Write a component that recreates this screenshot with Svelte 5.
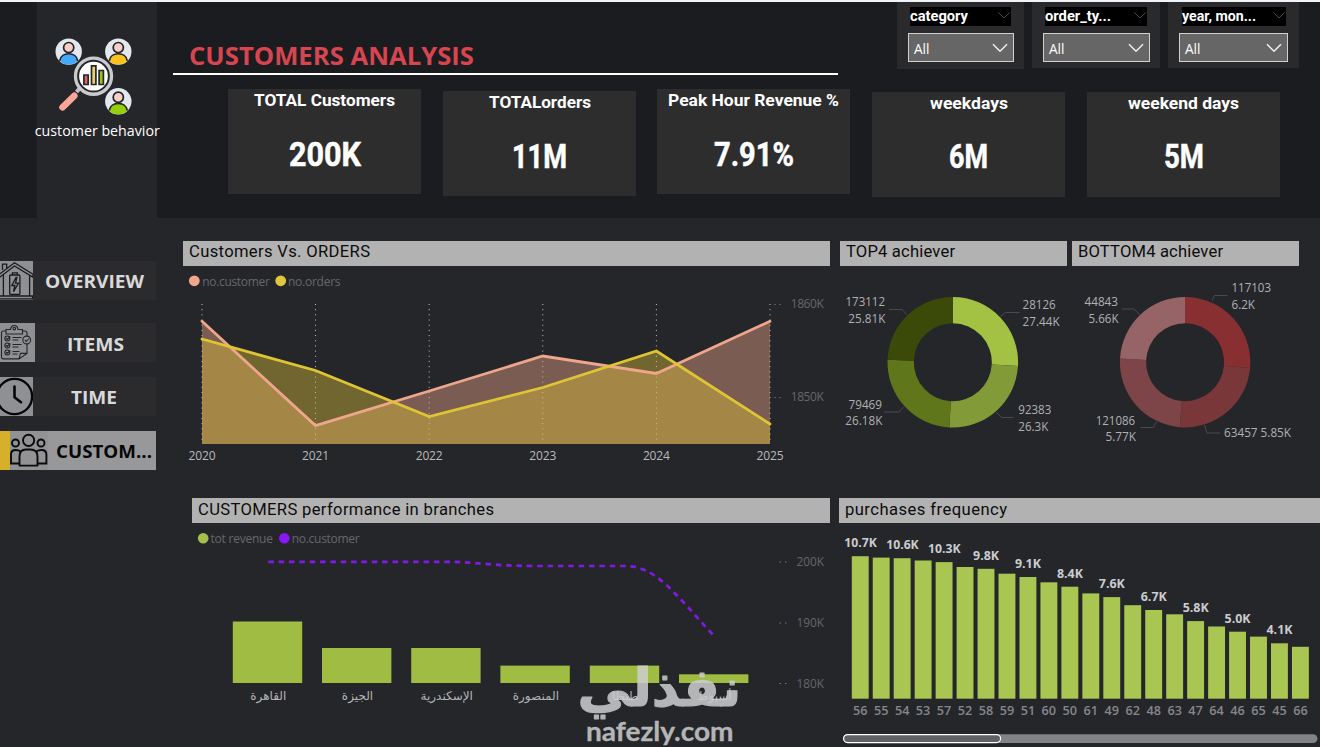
<script>
  const din = 'Roboto, sans-serif';
  const segoe = '"Open Sans", "Noto Sans", sans-serif';

  const slicers = [
    { name: 'category', w: 127, h: 67, tw: 58, box: 106, cap: 101, left: 11, ml: 2 },
    { name: 'order_ty...', w: 128, h: 66, tw: 66, box: 107, cap: 102, left: 11, ml: 2 },
    { name: 'year, mon...', w: 131, h: 66, tw: 74, box: 109, cap: 104, left: 11, ml: 3 }
  ];

  const cards = [
    { label: 'TOTAL Customers', lw: 141, value: '200K', vw: 72, top: 0, ml: 0, b: 17.3, vb: 37.4 },
    { label: 'TOTALorders', lw: 102, value: '11M', vw: 55, top: 1.5, ml: 22, b: 16.5, vb: 36.6 },
    { label: 'Peak Hour Revenue %', lw: 171, value: '7.91%', vw: 80, top: 0, ml: 21, b: 17.3, vb: 37.4 },
    { label: 'weekdays', lw: 78, value: '6M', vw: 39, top: 3, ml: 22, b: 17.3, vb: 36.4 },
    { label: 'weekend days', lw: 111, value: '5M', vw: 40, top: 3, ml: 22, b: 17.3, vb: 36.4 }
  ];

  const years = [2020, 2021, 2022, 2023, 2024, 2025];
  const xs = [202, 315.5, 429.2, 542.8, 656.4, 770];
  const customers = [321.3, 425.6, 391, 356, 373.5, 321.3];
  const orders = [339, 370.5, 416.5, 387.5, 351, 424];
  const line = (ys) => ys.map((y, i) => `${xs[i]},${y}`).join(' ');
  const area = (ys) => `${line(ys)} 770,444 202,444`;

  function ring(cx, cy, R, r, values, colors) {
    const total = values.reduce((a, b) => a + b, 0);
    let a = -Math.PI / 2;
    return values.map((v, i) => {
      const e = a + (v / total) * Math.PI * 2;
      const p = (rad, t) => `${(cx + rad * Math.cos(t)).toFixed(2)} ${(cy + rad * Math.sin(t)).toFixed(2)}`;
      const d = `M${p(R, a)}A${R} ${R} 0 0 1 ${p(R, e)}L${p(r, e)}A${r} ${r} 0 0 0 ${p(r, a)}Z`;
      a = e;
      return { d, fill: colors[i] };
    });
  }
  const topRing = ring(952.8, 362.2, 65.3, 39, [27.44, 26.3, 26.18, 25.81], ['#a3c142', '#839a39', '#5f771a', '#3b4a09']);
  const bottomRing = ring(1185.1, 362.2, 65.2, 39, [6.2, 5.85, 5.77, 5.66], ['#882f31', '#79373a', '#7d4548', '#966366']);

  const topLabels = [
    { t: '173112', x: 845.5, y: 306, w: 39.5 }, { t: '25.81K', x: 848.3, y: 323, w: 37 },
    { t: '28126', x: 1022.6, y: 309, w: 33 }, { t: '27.44K', x: 1022.6, y: 326, w: 37 },
    { t: '79469', x: 848.5, y: 409, w: 33.5 }, { t: '26.18K', x: 845.3, y: 425, w: 37 },
    { t: '92383', x: 1018.3, y: 414, w: 33 }, { t: '26.3K', x: 1018.3, y: 431, w: 30 }
  ];
  const bottomLabels = [
    { t: '44843', x: 1084.5, y: 306, w: 33.5 }, { t: '5.66K', x: 1088.5, y: 323, w: 30 },
    { t: '117103', x: 1231.5, y: 292, w: 39.5 }, { t: '6.2K', x: 1231.5, y: 309, w: 23.5 },
    { t: '121086', x: 1095.7, y: 425, w: 39.5 }, { t: '5.77K', x: 1105.5, y: 441, w: 30.5 },
    { t: '63457 5.85K', x: 1224, y: 437.3, w: 67 }
  ];

  const branches = [
    { n: 'القاهرة', x: 232.8, top: 621.5 }, { n: 'الجيزة', x: 322, top: 648 },
    { n: 'الإسكندرية', x: 411.2, top: 648 }, { n: 'المنصورة', x: 500.4, top: 665.6 },
    { n: 'طنطا', x: 589.8, top: 665.6 }, { n: 'أسيوط', x: 679, top: 674.3 }
  ];

  const ids = [56, 55, 54, 53, 57, 52, 58, 59, 51, 60, 50, 61, 49, 62, 48, 63, 47, 64, 46, 65, 45, 66];
  const tops = [556.2, 557.6, 558.2, 560.5, 562.1, 567, 568.8, 573.7, 577, 582.3, 586.7, 593.4, 597.1, 605.2, 610, 614.3, 621.1, 626.5, 631.7, 636.6, 643.3, 646.8];
  const freq = ['10.7K', '10.6K', '10.3K', '9.8K', '9.1K', '8.4K', '7.6K', '6.7K', '5.8K', '5.0K', '4.1K'];
  const barX = (i) => 851.8 + i * 20.96;
</script>

{#snippet fit(text, w, size, h, base, weight, family, adjust)}
  <svg class="fit" width={w} height={h}>
    <text y={base} font-size={size} font-weight={weight} font-family={family} textLength={w} lengthAdjust={adjust ?? 'spacingAndGlyphs'}>{text}</text>
  </svg>
{/snippet}

{#snippet person(x, y, color)}
  <g transform="translate({x} {y})">
    <circle r="13.2" fill="#e3e8ef" />
    <path d="M-9 9.4C-8-.2 8-.2 9 9.4A13.2 13.2 0 0 1-9 9.4Z" fill={color} />
    <path d="M-9 9.2C-7.5-.2 7.5-.2 9 9.2" fill="none" stroke="#222326" stroke-width="1.7" />
    <circle cy="-4" r="5.1" fill="#f9cfc5" stroke="#222326" stroke-width="1.7" />
  </g>
{/snippet}

<div class="page">
  <div class="strip"></div>
  <header>
    <div class="brand">
      <svg width="120" height="216" viewBox="37 2 120 216">
        {@render person(68.7, 51.6, '#45a9fb')}
        {@render person(118.3, 51.6, '#fbc21e')}
        {@render person(118.3, 101.3, '#95cf0b')}
        <path d="M80 88l-3.5 4" stroke="#bfc0c4" stroke-width="4" />
        <path d="M74.3 95.8L62.5 107.3" stroke="#f7a699" stroke-width="6.6" stroke-linecap="round" />
        <circle cx="93.5" cy="76.2" r="18" fill="#fff" stroke="#c9cacd" stroke-width="3.4" />
        <circle cx="93.5" cy="76.2" r="15.4" fill="#fff" stroke="#252629" stroke-width="2" />
        <g stroke="#252629" stroke-width="1.7">
          <path d="M83.9 75h4.3v9.5h-4.3z" fill="#dc6064" />
          <path d="M91.5 65.9h4.4v18.6h-4.4z" fill="#ead06a" />
          <path d="M99.1 70.5h4.3v14h-4.3z" fill="#98c514" />
        </g>
        <text x="34.8" y="136" font-size="14.6" font-family={segoe} fill="#fff" textLength="125" lengthAdjust="spacingAndGlyphs">customer behavior</text>
      </svg>
    </div>
    <div class="head">
      <div class="toprow">
        <h1>{@render fit('CUSTOMERS ANALYSIS', 285, 25.2, 36, 28, 700, segoe)}</h1>
        <div class="slicers">
          {#each slicers as s}
            <div class="slicer" style="width:{s.w}px;height:{s.h}px">
              <div class="cap" style="width:{s.cap}px;margin-left:{s.left + s.ml}px">
                {@render fit(s.name, s.tw, 15.4, 19, 14, 700, din)}
                <svg width="14" height="9" viewBox="0 0 14 9"><path d="M1.5 1.5L7 7l5.5-5.5" fill="none" stroke="#4a4a4c" stroke-width="1" /></svg>
              </div>
              <div class="select" style="width:{s.box}px;margin-left:{s.left}px">
                {@render fit('All', 15.5, 14, 20, 15.5, 400, segoe)}
                <svg width="16" height="10" viewBox="0 0 16 10"><path d="M1 1.3L8 8.3l7-7" fill="none" stroke="#f1f1f1" stroke-width="1.5" /></svg>
              </div>
            </div>
          {/each}
        </div>
      </div>
      <div class="cards">
        {#each cards as c}
          <div class="card" style="margin-top:{c.top}px;margin-left:{c.ml}px">
            {@render fit(c.label, c.lw, 17.4, 40, c.b, 700, din)}
            <div class="value">{@render fit(c.value, c.vw, 32.6, 50, c.vb, 700, din)}</div>
          </div>
        {/each}
      </div>
    </div>
  </header>

  <div class="body">
    <nav>
      <div class="item" style="margin-top:43px">
        <svg class="ico" width="33" height="39" viewBox="0 0 33 39" fill="none" stroke="#1a1a1c" stroke-width="1.3">
          <path d="M-1 13.5L14.5 1.8 33 13.2v3L14.5 5-1 16.800M2.500 9V3.200h4.200V7M3.400 14v20.600M29.600 14.500v20.100M-1 35h33.500v2.800H-1" />
          <rect x="9.700" y="14" width="10.200" height="19.500" rx="1" /><path d="M12.400 14v-2.200h5V14M16 16.500l-4.200 8h3l-1.300 6.200 5-8.600h-3l1.400-5.600z" />
        </svg>
        <div class="name">{@render fit('OVERVIEW', 99, 18, 39, 27, 700, segoe)}</div>
      </div>
      <div class="item" style="margin-top:23px">
        <svg class="ico" width="35" height="39" viewBox="0 0 35 39" fill="none" stroke="#242426" stroke-width="1.1">
          <path d="M6 8H3.200Q1.500 8 1.500 9.800V34q0 1.900 2 1.900H19l8-5.500V21M22.500 8h2.500q2 0 2 2v3M19 35.900l1.500-5.500H27M6 11V6.500h4.500Q11 2.500 14.300 2.500T18 6.500h4.500V11z" />
          <circle cx="14.300" cy="5.600" r="1.300" /><circle cx="26.700" cy="17" r="3.900" /><path d="M24.800 17l1.500 1.500 2.700-3" />
          <circle cx="7.300" cy="15.500" r="2.500" /><circle cx="7.300" cy="22.500" r="2.500" /><circle cx="7.300" cy="29.500" r="2.500" />
          <path d="M6 15.200l1.200 1.200 3-3M6 22.200l1.200 1.200 3-3M6 29.200l1.200 1.200 3-3M12.500 14.500h9M12.500 17h6M12.500 21.500h9M12.500 24h6M12.500 28.500h7M12.500 31h5" />
        </svg>
        <div class="name">{@render fit('ITEMS', 57, 18, 39, 28, 700, segoe)}</div>
      </div>
      <div class="item" style="margin-top:15px">
        <svg class="ico" width="33" height="39" viewBox="0 0 33 39" fill="none" stroke="#050505" stroke-width="2.300">
          <circle cx="14.500" cy="19.500" r="17.600" /><path d="M14.500 9.500v10.700l6.500 5" stroke-linecap="round" stroke-linejoin="round" stroke-width="2.600" />
        </svg>
        <div class="name">{@render fit('TIME', 46, 18, 39, 27, 700, segoe)}</div>
      </div>
      <div class="item active" style="margin-top:15px">
        <svg class="ico" width="38" height="39" viewBox="10 0 38 39" fill="none" stroke="#0a0a0a" stroke-width="1.900">
          <circle cx="28.600" cy="9.400" r="5.600" /><circle cx="15.500" cy="12" r="3.500" /><circle cx="41" cy="12" r="3.500" />
          <path d="M19.500 34.600v-9Q19.500 18.500 26 18.500h4.500q7 0 7 7v9z" stroke-linejoin="round" />
          <path d="M19.500 32.500H11v-9q0-4.500 4.500-4.500 3.500 0 5 1.500M37.500 32.500H46.400v-9q0-4.500-5-4.500-3 0-5 1.500" />
        </svg>
        <div class="name">{@render fit('CUSTOM...', 96, 18, 39, 27, 700, segoe)}</div>
      </div>
    </nav>

    <main>
      <div class="row first">
        <section style="width:647px">
          <h2>{@render fit('Customers Vs. ORDERS', 181, 16.6, 25, 16, 400, din, 'spacing')}</h2>
          <svg width="647" height="214" viewBox="183 266 647 214" font-family={segoe} font-size="12">
            <circle cx="194.300" cy="280.800" r="5.400" fill="#f0a78c" /><circle cx="280.700" cy="280.800" r="5.400" fill="#dfc63c" />
            <g fill="#66676a"><text x="202.300" y="286" textLength="67.500">no.customer</text><text x="288" y="286" textLength="52.500">no.orders</text></g>
            {#each xs as x}<path d="M{x} 304V444" stroke="#c4c4c4" stroke-width="1" stroke-dasharray="1 4.180" />{/each}
            <path d="M774.500 304.500h1m4 0h1M774.500 397.500h1m4 0h1" stroke="#8a8b8d" />
            <polygon points={area(customers)} fill="#f0a78c" fill-opacity=".42" />
            <polygon points={area(orders)} fill="#e3c838" fill-opacity=".4" />
            <polyline points={line(customers)} fill="none" stroke="#eea68c" stroke-width="2.800" stroke-linecap="round" />
            <polyline points={line(orders)} fill="none" stroke="#dfc534" stroke-width="2.800" stroke-linecap="round" />
            <g fill="#b9babb">{#each years as y, i}<text x={xs[i] - 13.500} y="460" textLength="27">{y}</text>{/each}</g>
            <g fill="#66676a"><text x="790.800" y="308" textLength="33">1860K</text><text x="790.800" y="401" textLength="33">1850K</text></g>
          </svg>
        </section>
        <section style="width:227px;margin-left:10px">
          <h2>{@render fit('TOP4 achiever', 109, 16.600, 25, 16, 400, din, 'spacing')}</h2>
          <svg width="227" height="214" viewBox="840 266 227 214" font-family={segoe} font-size="12.200">
            {#each topRing as s}<path d={s.d} fill={s.fill} />{/each}
            <path d="M889 309.500h13l5 5M1019.500 312.500h-14l-5 4M884 412h15l4.500-5M1013.500 417.500h-12l-5-5" fill="none" stroke="#494a4d" />
            <g fill="#b0b1b3">{#each topLabels as l}<text x={l.x} y={l.y} textLength={l.w} lengthAdjust="spacingAndGlyphs">{l.t}</text>{/each}</g>
          </svg>
        </section>
        <section style="width:227px;margin-left:5px">
          <h2>{@render fit('BOTTOM4 achiever', 145, 16.600, 25, 16, 400, din, 'spacing')}</h2>
          <svg width="227" height="214" viewBox="1072 266 227 214" font-family={segoe} font-size="12.200">
            {#each bottomRing as s}<path d={s.d} fill={s.fill} />{/each}
            <path d="M1122 309h12l5.500 5.500M1227.500 295.500h-13l-2.500 5M1140.500 427.500h13l3-6M1220 433h-13l-2.500-8" fill="none" stroke="#494a4d" />
            <g fill="#b0b1b3">{#each bottomLabels as l}<text x={l.x} y={l.y} textLength={l.w} lengthAdjust="spacingAndGlyphs">{l.t}</text>{/each}</g>
          </svg>
        </section>
      </div>
      <div class="row second">
        <section style="width:638px">
          <h2>{@render fit('CUSTOMERS performance in branches', 296, 16.600, 25, 16.800, 400, din, 'spacing')}</h2>
          <svg width="638" height="224" viewBox="192 523 638 224" font-family={segoe} font-size="12">
            <circle cx="203.200" cy="538.200" r="5.300" fill="#a8bf4a" /><circle cx="284.300" cy="538.200" r="5.300" fill="#8a17f5" />
            <g fill="#66676a"><text x="210.500" y="543" textLength="62.500">tot revenue</text><text x="291.700" y="543" textLength="68">no.customer</text></g>
            <path d="M779.500 562h1.500m4 0h1.500M779.500 623h1.500m4 0h1.500M779.500 683.500h1.500m4 0h1.500" stroke="#77787a" />
            <g fill="#66676a"><text x="796.500" y="566.300" textLength="27.500" lengthAdjust="spacingAndGlyphs">200K</text><text x="796.500" y="627.300" textLength="27.500" lengthAdjust="spacingAndGlyphs">190K</text><text x="796.500" y="688" textLength="27.500" lengthAdjust="spacingAndGlyphs">180K</text></g>
            {#each branches as b}
              <rect x={b.x} y={b.top} width="69.400" height={683 - b.top} fill="#a1bc42" />
              <text class="ar" x={b.x + 35.500} y="700" text-anchor="middle" fill="#b4b5b7">{b.n}</text>
            {/each}
            <path d="M268.300 561.800H446C475 561.800 492 566 535 566H625C655 566 672 590 714 636" fill="none" stroke="#8319e6" stroke-width="2.700" stroke-dasharray="5.500 4.850" />
          </svg>
        </section>
        <section style="width:481px;margin-left:9px">
          <h2>{@render fit('purchases frequency', 162, 16.600, 25, 16.800, 400, din, 'spacing')}</h2>
          <svg width="481" height="224" viewBox="839 523 481 224" font-family={segoe} font-size="12">
            {#each ids as id, i}
              <rect x={barX(i)} y={tops[i]} width="16.900" height={698.700 - tops[i]} fill="#a9c552" />
              <text x={barX(i) + 1.200} y="715" textLength="14.500" fill="#85868a" font-weight="600" lengthAdjust="spacingAndGlyphs">{id}</text>
            {/each}
            {#each freq as f, i}
              <text x={barX(i * 2) + 8.500 - (i < 3 ? 16 : 13)} y={tops[i * 2] - 9.200} font-weight="700" fill="#cbccce" textLength={i < 3 ? 32.500 : 26} lengthAdjust="spacingAndGlyphs">{f}</text>
            {/each}
            <rect x="843" y="734.200" width="474.500" height="8.800" rx="4.400" fill="#828385" />
            <rect x="843.600" y="734.600" width="157" height="8" rx="4" fill="#606163" stroke="#fff" stroke-width="1.200" />
          </svg>
        </section>
      </div>
    </main>
  </div>

  <svg class="mark" width="170" height="90" viewBox="575 657 170 90">
    <g fill="#cdced0" stroke="#cdced0" stroke-linejoin="round" opacity=".85">
      <text class="ar" transform="translate(659.500 706) scale(1.050 1.030)" text-anchor="middle" font-size="51" font-weight="700" stroke-width="1.200">نفذلي</text>
      <text x="586" y="741" font-size="27" font-weight="700" font-family="Lato, sans-serif" textLength="147.500" lengthAdjust="spacingAndGlyphs" stroke-width=".3">nafezly.com</text>
    </g>
  </svg>
</div>

<style>
  :global(body) { margin: 0; background: #25262a; }
  .page { position: relative; width: 1320px; height: 747px; overflow: hidden; background: #25262a; color: #fff; }
  svg { display: block; flex: none; overflow: visible; }
  .fit text { fill: currentColor; }
  .value text { stroke: #fff; stroke-width: .5px; }
  .strip { height: 2px; background: #f1f5f9; }
  header { display: flex; box-sizing: border-box; height: 216px; background: #1b1c1f; padding-left: 37px; }
  .brand { width: 120px; height: 216px; background: #25262a; }
  .head { flex: 1; }
  .toprow { display: flex; height: 72.500px; padding-left: 16px; }
  h1 { margin: 0; width: 649px; box-sizing: content-box; padding: 35px 0 0 16px; height: 35.500px; border-bottom: 2.500px solid #fff; color: #d64550; }
  .slicers { display: flex; gap: 8px; margin-left: 59px; }
  .slicer { background: #2a2a2c; }
  .cap { display: flex; justify-content: space-between; align-items: flex-start; height: 19px; margin-top: 5px; background: #000; }
  .cap > :global(svg:last-child) { margin-top: 4px; }
  .select { display: flex; justify-content: space-between; align-items: center; box-sizing: border-box; height: 29px; margin-top: 7px; padding: 0 5px; background: #666; border: 1px solid #d0d0d0; }
  .cards { display: flex; align-items: flex-start; padding: 14.500px 0 0 71px; }
  .card { display: flex; flex-direction: column; align-items: center; width: 193px; height: 105px; background: #2d2d2e; }
  .body { display: flex; height: 529px; }
  nav { width: 157px; }
  .item { display: flex; width: 156px; height: 39px; background: #2b2b2d; color: #d9d9da; }
  .ico { background: #8f9093; overflow: hidden; }
  .name { display: flex; flex: 1; justify-content: center; }
  .item:not(.active) .name { padding-right: 1px; }
  .active { background: #98989b; color: #070707; box-sizing: border-box; border-left: 10px solid #d7b02b; }
  .active .ico { background: #929295; }
  .active .name { justify-content: flex-end; padding-right: 4px; }
  main { flex: 1; }
  .row { display: flex; }
  .first { padding: 23px 0 0 26px; height: 258px; box-sizing: border-box; }
  .second { padding: 22px 0 0 35px; }
  h2 { box-sizing: border-box; height: 25px; margin: 0; padding-left: 5.500px; background: #b2b2b2; color: #0c0c0c; overflow: hidden; }
  .ar { font-family: "DejaVu Sans", sans-serif; }
  .mark { position: absolute; left: 575px; top: 657px; }
</style>
